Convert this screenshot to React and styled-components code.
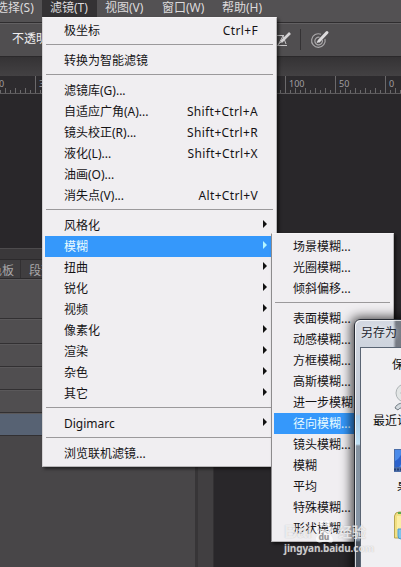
import React from 'react';
import styled, { createGlobalStyle } from 'styled-components';

const FILTER_GROUPS = [
    [{ label: '极坐标', keys: 'Ctrl+F' }],
    [{ label: '转换为智能滤镜' }],
    [
        { label: '滤镜库(G)...' },
        { label: '自适应广角(A)...', keys: 'Shift+Ctrl+A' },
        { label: '镜头校正(R)...', keys: 'Shift+Ctrl+R' },
        { label: '液化(L)...', keys: 'Shift+Ctrl+X' },
        { label: '油画(O)...' },
        { label: '消失点(V)...', keys: 'Alt+Ctrl+V' }
    ],
    [
        { label: '风格化', sub: true },
        { label: '模糊', sub: true, active: true },
        { label: '扭曲', sub: true },
        { label: '锐化', sub: true },
        { label: '视频', sub: true },
        { label: '像素化', sub: true },
        { label: '渲染', sub: true },
        { label: '杂色', sub: true },
        { label: '其它', sub: true }
    ],
    [{ label: 'Digimarc', sub: true }],
    [{ label: '浏览联机滤镜...' }]
];

const BLUR_GROUPS = [
    [{ label: '场景模糊...' }, { label: '光圈模糊...' }, { label: '倾斜偏移...' }],
    [
        { label: '表面模糊...' },
        { label: '动感模糊...' },
        { label: '方框模糊...' },
        { label: '高斯模糊...' },
        { label: '进一步模糊' },
        { label: '径向模糊...', active: true },
        { label: '镜头模糊...' },
        { label: '模糊' },
        { label: '平均' },
        { label: '特殊模糊...' },
        { label: '形状模糊...' }
    ]
];

const RULER_TICKS = Array.from({ length: 82 }, (_, i) => i * 5 + 0.5);
const RULER_LABELS = [[-1, '0'], [39, '350'], [289, '100'], [339, '50'], [389, '0']];

const GlobalStyle = createGlobalStyle`
  html, body {
    margin: 0;
    overflow: hidden;
    background: #29272a;
  }
  * {
    box-sizing: border-box;
  }
`;

const Screen = styled.div`
  position: relative;
  display: flex;
  flex-direction: column;
  width: 401px;
  height: 567px;
  overflow: hidden;
  background: #29272a;
  font-family: 'Noto Sans', 'Noto Sans CJK SC', sans-serif;
  font-size: 12px;
  white-space: nowrap;
`;

const MenuBar = styled.div`
  display: flex;
  flex: none;
  height: 22px;
  background: #535153;
`;

const MenuTitle = styled.div`
  flex: none;
  width: ${(p) => p.$width}px;
  height: 17px;
  padding-left: 8px;
  text-indent: ${(p) => p.$shift || 0}px;
  line-height: 16px;
  color: #dcdadc;
  background: ${(p) => (p.$open ? '#343234' : 'transparent')};
`;

const OptionsBar = styled.div`
  display: flex;
  flex: none;
  align-items: center;
  height: 35px;
  border-top: 1px solid #2f2d2f;
  border-bottom: 1px solid #2b292b;
  box-shadow: inset 0 1px #626062;
  background: #504e50;
  color: #f0eef0;
`;

const OptionLabel = styled.span`
  width: 272px;
  padding: 0 0 3px 12px;
`;

const Divider = styled.i`
  width: 1px;
  height: 21px;
  margin: 0 9px 0 8px;
  background: #343234;
`;

const DocTabs = styled.div`
  flex: none;
  height: 19px;
  background: linear-gradient(#353335, #434143);
`;

const Ruler = styled.svg`
  display: block;
  flex: none;
  background: #2d2b2e;
`;

const Workspace = styled.div`
  display: flex;
  flex: 1;
`;

const Dock = styled.div`
  display: flex;
  flex-direction: column;
  width: 198px;
  margin-top: 154px;
  border-right: 3px solid #373537;
  background: #484648;
`;

const Gutter = styled.div`
  width: 16px;
  margin-top: 154px;
  background: #413f41;
  border-right: 1px solid #333133;
`;

const DockHead = styled.div`
  height: 12px;
  border-top: 1px solid #4d4b4d;
  border-bottom: 1px solid #2c2a2c;
  background: #3a383a;
`;

const DockTabs = styled.div`
  display: flex;
  height: 19px;
  line-height: 21px;
  border-bottom: 1px solid #2c2a2c;
  background: #403e40;
  color: #a8a6a8;
`;

const DockTab = styled.div`
  flex: none;
  width: ${(p) => p.$width}px;
  padding-left: ${(p) => p.$pad || 0}px;
  text-indent: ${(p) => p.$shift || 0}px;
  border-right: 1px solid #323032;
`;

const LayerRow = styled.div`
  height: ${(p) => p.$height}px;
  border-bottom: 1px solid #323032;
  box-shadow: inset 0 1px #5a585a;
  background: ${(p) => (p.$active ? '#576273' : '#504e50')};
`;

const Popup = styled.div`
  position: absolute;
  left: ${(p) => p.$left}px;
  top: ${(p) => p.$top}px;
  width: ${(p) => p.$width}px;
  padding: 2px;
  border: 1px solid;
  border-color: #f6f4f6 #b8b6b8 #b8b6b8 ${(p) => (p.$nested ? '#8d8b8d' : '#d4d2d4')};
  background: #f0eef1;
  box-shadow: 2px 2px 3px rgba(0, 0, 0, 0.55);
`;

const Item = styled.div`
  display: flex;
  align-items: center;
  height: 21px;
  padding: 1px ${(p) => (p.$arrow ? 6 : 16)}px 0 19px;
  line-height: 20px;
  color: ${(p) => (p.$active ? '#e8fbff' : '#151315')};
  background: ${(p) => (p.$active ? '#3598fb' : 'transparent')};
`;

const Label = styled.span`
  flex: 1;
`;

const Shortcut = styled.span`
  letter-spacing: 0.35px;
`;

const Separator = styled.div`
  height: 9px;
  padding: 3px 1px 0;

  &::before {
    content: '';
    display: block;
    height: 1px;
    background: #9b999b;
  }
`;

const Arrow = styled.i`
  border: solid transparent;
  border-width: 4px 0 4px 4px;
  border-left-color: ${(p) => (p.$active ? '#b5f6ff' : '#111')};
  margin: -4px 1px 0 0;
`;

const Dialog = styled.div`
  position: absolute;
  left: 354px;
  top: 319px;
  width: 80px;
  height: 270px;
  padding: 0 0 0 5px;
  border: 1px solid #272b33;
  border-radius: 6px 0 0 0;
  background:
    linear-gradient(90deg, transparent 38px, rgba(70, 74, 84, 0.65) 41px) 0 0 / 100% 28px no-repeat,
    linear-gradient(#d3d8e1, #c1c9d5 94px, #a9cde9 96px, #c2e2f5 124px, #8795a3 126px, #8796a6 220px, #4a535f 222px);
  box-shadow: inset 1px 1px rgba(255, 255, 255, 0.75), -1px 0 11px 2px rgba(0, 0, 0, 0.7);
`;

const DialogTitle = styled.div`
  height: 27px;
  padding-left: 1px;
  line-height: 26px;
  color: #252830;
  text-shadow: 0 0 5px #fff;
`;

const DialogBody = styled.div`
  display: flex;
  flex-direction: column;
  height: 240px;
  border: 1px solid #596473;
  background: #f0eff2;
  color: #111;
`;

const LookIn = styled.div`
  height: 36px;
  padding-left: 31px;
  line-height: 34px;
`;

const Place = styled.div`
  height: ${(p) => p.$height}px;
  padding-left: ${(p) => p.$pad}px;
  line-height: 18px;

  svg {
    display: block;
    margin-left: ${(p) => 33 - p.$pad}px;
  }
`;

const PlaceName = styled.div`
  padding-top: 4px;
`;

const Watermark = styled.div`
  position: absolute;
  left: 284px;
  top: 521px;
  color: rgba(255, 255, 255, 0.72);
  font-family: 'Liberation Sans', 'Noto Sans CJK SC', sans-serif;
  font-weight: bold;
  text-shadow: 0 0 1px rgba(130, 128, 130, 0.5);
`;

const Brand = styled.div`
  display: flex;
  align-items: center;
  height: 21px;
  font-size: 18px;
  line-height: 24px;
`;

const BrandSuffix = styled.span`
  margin-left: 2px;
  font-size: 14px;
`;

const Site = styled.div`
  font-family: 'Noto Sans', sans-serif;
  font-size: 10px;
  line-height: 13px;
  letter-spacing: -0.1px;
`;

const PenPressureIcon = () => (
    <svg width="20" height="20" viewBox="0 0 20 20" fill="none">
        <path d="M3 5.500h9M6 15L11 6l3 8M4 15.500h11" stroke="#c9c7c9" />
        <path d="M9 12L18 3" stroke="#d4d2d4" strokeWidth="2.6" />
        <path d="M4 17l5-5" stroke="#c1bfc1" />
    </svg>
);

const AirbrushIcon = () => (
    <svg width="20" height="20" viewBox="0 0 20 20" fill="none">
        <path d="M11 4.3A6.8 6.8 0 1 0 15 9" stroke="#aaa8aa" strokeWidth="1.2" />
        <path d="M9.5 7.3A3.8 3.8 0 1 0 12.3 10" stroke="#aaa8aa" strokeWidth="1.2" />
        <path d="M9 11L17 2.500" stroke="#dddbdd" strokeWidth="3" strokeLinecap="round" />
        <path d="M7 12.5l3-2.5" stroke="#dddbdd" strokeWidth="1.5" />
    </svg>
);

const RecentIcon = () => (
    <svg width="32" height="28" viewBox="0 0 32 28">
        <circle cx="11" cy="9" r="9" fill="#e2e5e5" stroke="#adb3b5" />
        <circle cx="11" cy="9" r="4" fill="#f3f4f4" stroke="#a8b0b1" />
        <path d="M1 24c2-5 8-6 14-4v6c-5-3-9-3-11 0z" fill="#d3d9de" stroke="#707a82" />
    </svg>
);

const DesktopIcon = () => (
    <svg width="32" height="24" viewBox="0 0 32 24">
        <rect width="32" height="23" fill="#4a6da8" />
        <rect x="1" y="1" width="30" height="17" fill="#4b8bea" />
        <path d="M1 12Q6 10 9 1h8L5 18H1z" fill="#2b62cc" />
        <path d="M0 20.500h32" stroke="#243e72" strokeWidth="2" strokeDasharray="2 1" />
    </svg>
);

const LibraryIcon = () => (
    <svg width="32" height="29" viewBox="0 0 32 29">
        <path d="M.5 5Q1 1 5 1h17v26H.5z" fill="#f2e083" stroke="#b9a651" />
        <path d="M4 2h14" stroke="#5ca84e" strokeWidth="2" />
        <path d="M3 5h20v20H3z" fill="#fbeea4" />
        <path d="M4 18h15v10H7q-3 0-3-3z" fill="#7ec4ec" stroke="#4b99ca" />
    </svg>
);

const PawIcon = () => (
    <svg width="24" height="26" viewBox="0 0 15 20" fill="currentColor">
        <ellipse cx="2.3" cy="8" rx="1.7" ry="2.4" />
        <ellipse cx="5.6" cy="3.5" rx="1.7" ry="2.6" />
        <ellipse cx="10" cy="3.5" rx="1.7" ry="2.6" />
        <ellipse cx="13" cy="8" rx="1.6" ry="2.4" />
        <path d="M7.5 8C5 8 5 11 2.5 13s-1 5 1.5 5 5-1 8 0 3-3 1-5-3-5-5.500-5z" />
        <text x="3.5" y="16.500" fontSize="6.500" fill="#8f8d90">du</text>
    </svg>
);

const Menu = ({ groups, ...place }) => (
    <Popup {...place}>
        {groups.map((items, i) => (
            <React.Fragment key={i}>
                {i > 0 && <Separator />}
                {items.map(({ label, keys, sub, active }) => (
                    <Item key={label} $active={active} $arrow={sub}>
                        <Label>{label}</Label>
                        {keys && <Shortcut>{keys}</Shortcut>}
                        {sub && <Arrow $active={active} />}
                    </Item>
                ))}
            </React.Fragment>
        ))}
    </Popup>
);

export default function App() {
    return (
        <>
            <GlobalStyle />
            <Screen>
                <MenuBar>
                    <MenuTitle $width={42} $shift={-12}>选择(S)</MenuTitle>
                    <MenuTitle $width={55} $open>滤镜(T)</MenuTitle>
                    <MenuTitle $width={57}>视图(V)</MenuTitle>
                    <MenuTitle $width={60}>窗口(W)</MenuTitle>
                    <MenuTitle $width={60}>帮助(H)</MenuTitle>
                </MenuBar>
                <OptionsBar>
                    <OptionLabel>不透明度:</OptionLabel>
                    <PenPressureIcon />
                    <Divider />
                    <AirbrushIcon />
                </OptionsBar>
                <DocTabs />
                <Ruler width="401" height="18">
                    {RULER_TICKS.map((x, i) => (
                        <path
                            key={x}
                            d={`M${x} ${i % 10 === 7 ? 0 : i % 2 ? 12 : 14}V17`}
                            stroke="#6b696b"
                        />
                    ))}
                    <path d="M0 17.5H401" stroke="#5d5b5d" />
                    {RULER_LABELS.map(([x, text]) => (
                        <text key={x} x={x} y="11" fill="#a09ea0" fontSize="9">{text}</text>
                    ))}
                </Ruler>
                <Workspace>
                    <Dock>
                        <DockHead />
                        <DockTabs>
                            <DockTab $width={21} $shift={-10}>色板</DockTab>
                            <DockTab $width={60} $pad={8}>段落</DockTab>
                        </DockTabs>
                        <LayerRow $height={40} />
                        <LayerRow $height={25} />
                        <LayerRow $height={23} />
                        <LayerRow $height={23} />
                        <LayerRow $height={23} />
                        <LayerRow $height={23} $active />
                    </Dock>
                    <Gutter />
                </Workspace>
                <Menu groups={FILTER_GROUPS} $left={42} $top={17} $width={235} />
                <Menu groups={BLUR_GROUPS} $left={271} $top={233} $width={123} $nested />
                <Dialog>
                    <DialogTitle>另存为</DialogTitle>
                    <DialogBody>
                        <LookIn>保存在(I):</LookIn>
                        <Place $height={65} $pad={12}>
                            <RecentIcon />
                            最近访问的位置
                        </Place>
                        <Place $height={62} $pad={36}>
                            <DesktopIcon />
                            <PlaceName>桌面</PlaceName>
                        </Place>
                        <Place $height={60} $pad={33}>
                            <LibraryIcon />
                        </Place>
                    </DialogBody>
                </Dialog>
                <Watermark>
                    <Brand>Bai<PawIcon /><BrandSuffix>经验</BrandSuffix></Brand>
                    <Site>jingyan.baidu.com</Site>
                </Watermark>
            </Screen>
        </>
    );
}
